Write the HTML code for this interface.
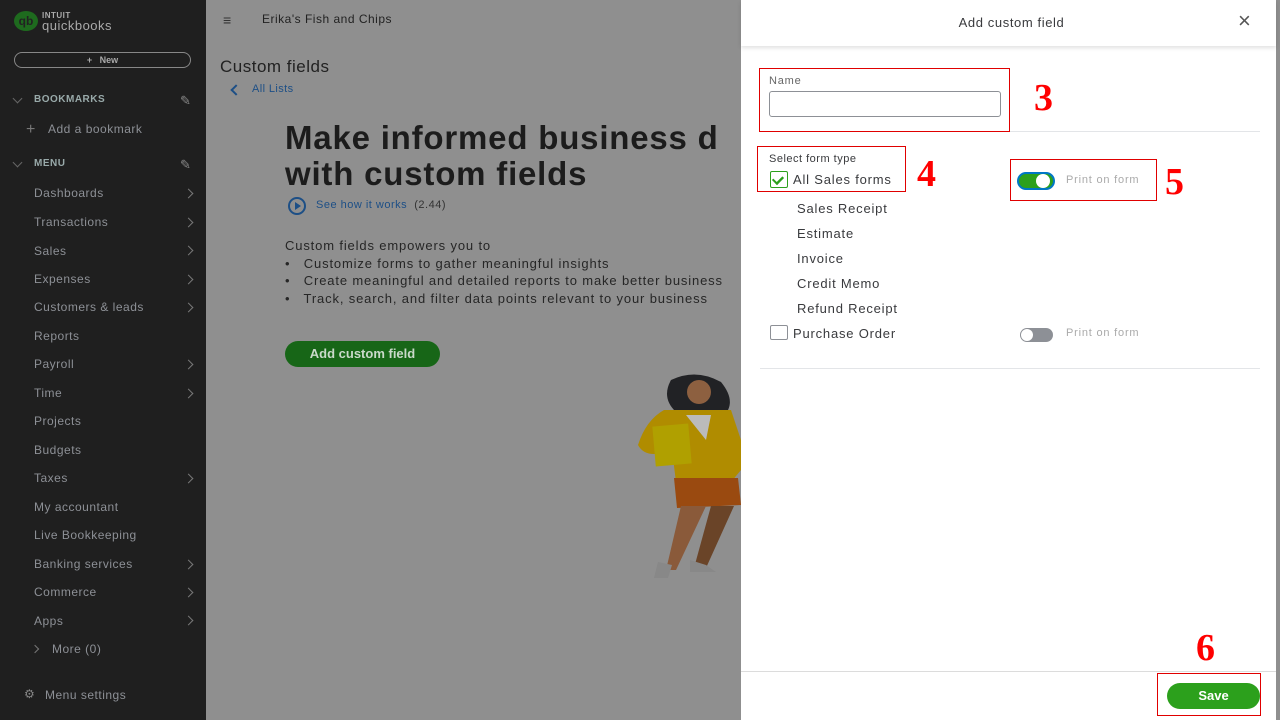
<!DOCTYPE html>
<html><head><meta charset="utf-8"><style>
*{margin:0;padding:0;box-sizing:border-box}
body{width:1280px;height:720px;overflow:hidden;position:relative;font-family:"Liberation Sans",sans-serif;background:#8f8f8f}
.sb{position:absolute;left:0;top:0;width:206px;height:720px;background:#1f1f1f;color:#8e9196}
.sb .it{position:absolute;left:34px;font-size:12px;color:#8d9096;letter-spacing:.5px}
.chev{position:absolute;left:185px;width:7px;height:7px;border-right:1.5px solid #777;border-top:1.5px solid #777;transform:rotate(45deg)}
.main{position:absolute;left:206px;top:0;width:535px;height:720px;background:#8f8f8f}
.panel{position:absolute;left:741px;top:0;width:535px;height:720px;background:#fff}
.red{position:absolute;border:1px solid #e00000}
.num{position:absolute;font-family:"Liberation Serif","DejaVu Serif",serif;font-weight:bold;font-style:normal;color:#f00;font-size:38px}
.lbl{position:absolute;font-size:13px;color:#393a3d;letter-spacing:.8px}
</style></head><body>
<div class="sb">
  <div style="position:absolute;left:14px;top:11px;width:24px;height:20px;border-radius:50%;background:#1e6a1e;color:#222;font-size:12px;font-weight:bold;text-align:center;line-height:20px">qb</div>
  <div style="position:absolute;left:42px;top:11px;font-size:8px;color:#aaa;font-weight:bold;letter-spacing:.5px">INTUIT</div>
  <div style="position:absolute;left:42px;top:18px;font-size:13px;color:#aaa;letter-spacing:.5px">quickbooks</div>
  <div style="position:absolute;left:14px;top:52px;width:177px;height:16px;border:1px solid #888;border-radius:9px;text-align:center;font-size:9px;line-height:14px;color:#aaa;font-weight:bold">+&nbsp;&nbsp; New</div>
  <div style="position:absolute;left:14px;top:95px;width:7px;height:7px;border-right:1px solid #666;border-bottom:1px solid #666;transform:rotate(45deg)"></div>
  <div class="it" style="top:94px;font-size:10px;font-weight:bold;color:#9aa">BOOKMARKS</div>
  <div style="position:absolute;left:180px;top:93px;color:#888;font-size:13px">✎</div>
  <div class="it" style="left:26px;top:121px;font-size:16px;color:#777">+</div>
  <div class="it" style="left:48px;top:122px">Add a bookmark</div>
  <div style="position:absolute;left:14px;top:159px;width:7px;height:7px;border-right:1px solid #666;border-bottom:1px solid #666;transform:rotate(45deg)"></div>
  <div class="it" style="top:158px;font-size:10px;font-weight:bold;color:#9aa">MENU</div>
  <div style="position:absolute;left:180px;top:157px;color:#888;font-size:13px">✎</div>
  <div class="it" style="top:186px">Dashboards</div><div class="chev" style="top:190px"></div>
  <div class="it" style="top:215px">Transactions</div><div class="chev" style="top:219px"></div>
  <div class="it" style="top:244px">Sales</div><div class="chev" style="top:247px"></div>
  <div class="it" style="top:272px">Expenses</div><div class="chev" style="top:276px"></div>
  <div class="it" style="top:300px">Customers &amp; leads</div><div class="chev" style="top:304px"></div>
  <div class="it" style="top:329px">Reports</div>
  <div class="it" style="top:357px">Payroll</div><div class="chev" style="top:361px"></div>
  <div class="it" style="top:386px">Time</div><div class="chev" style="top:390px"></div>
  <div class="it" style="top:414px">Projects</div>
  <div class="it" style="top:443px">Budgets</div>
  <div class="it" style="top:471px">Taxes</div><div class="chev" style="top:475px"></div>
  <div class="it" style="top:500px">My accountant</div>
  <div class="it" style="top:528px">Live Bookkeeping</div>
  <div class="it" style="top:557px">Banking services</div><div class="chev" style="top:561px"></div>
  <div class="it" style="top:585px">Commerce</div><div class="chev" style="top:589px"></div>
  <div class="it" style="top:614px">Apps</div><div class="chev" style="top:617px"></div>
  <div class="chev" style="left:32px;top:646px;width:6px;height:6px"></div>
  <div class="it" style="left:52px;top:642px">More (0)</div>
  <div class="it" style="left:24px;top:687px;color:#888">⚙</div>
  <div class="it" style="left:45px;top:688px">Menu settings</div>
</div>
<div class="main">
  <div style="position:absolute;left:17px;top:12px;font-size:14px;color:#333">≡</div>
  <div style="position:absolute;left:56px;top:12px;font-size:12px;color:#222;letter-spacing:.5px">Erika's Fish and Chips</div>
  <div style="position:absolute;left:14px;top:57px;font-size:17px;color:#222;letter-spacing:.5px">Custom fields</div>
  <div style="position:absolute;left:26px;top:86px;width:8px;height:8px;border-left:2px solid #1d4f86;border-bottom:2px solid #1d4f86;transform:rotate(45deg)"></div>
  <div style="position:absolute;left:46px;top:83px;font-size:11px;color:#1d4f86;letter-spacing:.4px">All Lists</div>
  <div style="position:absolute;left:79px;top:120px;font-size:33px;font-weight:bold;color:#1c1c1c;line-height:36px;white-space:nowrap;letter-spacing:.8px">Make informed business d<br>with custom fields</div>
  <div style="position:absolute;left:82px;top:197px;width:18px;height:18px;border:2px solid #1d4f86;border-radius:50%"></div>
  <div style="position:absolute;left:89px;top:202px;border-left:6px solid #1d4f86;border-top:4px solid transparent;border-bottom:4px solid transparent"></div>
  <div style="position:absolute;left:110px;top:199px;font-size:11px;color:#1d4f86;letter-spacing:.5px">See how it works <span style="color:#333">&nbsp;(2.44)</span></div>
  <div style="position:absolute;left:79px;top:237px;font-size:13px;color:#262626;line-height:17.5px;white-space:nowrap;letter-spacing:.85px">Custom fields empowers you to<br>•&nbsp;&nbsp; Customize forms to gather meaningful insights<br>•&nbsp;&nbsp; Create meaningful and detailed reports to make better business<br>•&nbsp;&nbsp; Track, search, and filter data points relevant to your business</div>
  <div style="position:absolute;left:79px;top:341px;width:155px;height:26px;background:#176617;border-radius:13px;color:#c9d9c9;font-size:13px;font-weight:bold;text-align:center;line-height:26px">Add custom field</div>
  <svg style="position:absolute;left:0;top:0" width="535" height="720">
    <path d="M465 380 Q490 368 515 382 Q528 398 522 410 L470 412 Q455 398 465 380Z" fill="#212225"/>
    <circle cx="493" cy="392" r="12" fill="#8d6040"/>
    <path d="M458 410 L525 410 L535 440 L535 470 L525 482 L470 482 L466 450 Q440 460 432 445 Q440 420 458 410Z" fill="#b08c00"/>
    <rect x="448" y="425" width="36" height="40" fill="#b0a000" transform="rotate(-5 466 445)"/>
    <path d="M480 415 L505 415 L500 440Z" fill="#bbb"/>
    <path d="M468 478 L532 478 L535 505 L471 508Z" fill="#9a4a10"/>
    <path d="M475 506 L500 506 L470 570 L460 570Z" fill="#8a5a3a"/>
    <path d="M505 506 L528 506 L500 568 L488 568Z" fill="#6a4428"/>
    <path d="M452 562 L466 565 L462 578 L448 578Z" fill="#888"/>
    <path d="M484 560 L500 565 L510 572 L484 572Z" fill="#888"/>
  </svg>
</div>
<div style="position:absolute;left:1276px;top:0;width:4px;height:720px;background:#8f8f8f"></div>
<div class="panel">
  <div style="position:absolute;left:0;top:0;width:535px;height:46px;box-shadow:0 2px 4px rgba(0,0,0,.12)"></div>
  <div style="position:absolute;left:0;top:15px;width:541px;text-align:center;font-size:13px;color:#393a3d;letter-spacing:.6px">Add custom field</div>
  <div style="position:absolute;left:497px;top:8px;font-size:22px;color:#555;font-weight:300">×</div>
  <div class="red" style="left:18px;top:68px;width:251px;height:64px"></div>
  <div class="lbl" style="left:28px;top:75px;font-size:11px;color:#666">Name</div>
  <div style="position:absolute;left:28px;top:91px;width:232px;height:26px;border:1px solid #8d9096;border-radius:3px"></div>
  <div style="position:absolute;left:269px;top:131px;width:250px;height:1px;background:#e3e5e8"></div>
  <div class="num" style="left:293px;top:76px">3</div>
  <div class="red" style="left:16px;top:146px;width:149px;height:46px"></div>
  <div class="lbl" style="left:28px;top:153px;font-size:11px;letter-spacing:.5px">Select form type</div>
  <div style="position:absolute;left:29px;top:171px;width:18px;height:17px;border:1.5px solid #2ca01c;border-radius:2px"></div>
  <div style="position:absolute;left:34px;top:174px;width:6px;height:10px;border-right:2px solid #2ca01c;border-bottom:2px solid #2ca01c;transform:rotate(45deg) scaleX(1.2)"></div>
  <div class="lbl" style="left:52px;top:172px">All Sales forms</div>
  <div class="num" style="left:176px;top:152px">4</div>
  <div class="red" style="left:269px;top:159px;width:147px;height:42px"></div>
  <div style="position:absolute;left:276px;top:172px;width:38px;height:18px;border-radius:9px;background:#2ca01c;border:2px solid #0077c5"></div>
  <div style="position:absolute;left:295px;top:174px;width:14px;height:14px;border-radius:50%;background:#fff"></div>
  <div class="lbl" style="left:325px;top:174px;font-size:11px;color:#aaa">Print on form</div>
  <div class="num" style="left:424px;top:160px">5</div>
  <div class="lbl" style="left:56px;top:201px">Sales Receipt</div>
  <div class="lbl" style="left:56px;top:226px">Estimate</div>
  <div class="lbl" style="left:56px;top:251px">Invoice</div>
  <div class="lbl" style="left:56px;top:276px">Credit Memo</div>
  <div class="lbl" style="left:56px;top:301px">Refund Receipt</div>
  <div style="position:absolute;left:29px;top:325px;width:18px;height:15px;border:1px solid #8d9096;border-radius:2px"></div>
  <div class="lbl" style="left:52px;top:326px">Purchase Order</div>
  <div style="position:absolute;left:279px;top:328px;width:33px;height:14px;border-radius:7px;background:#8d9096"></div>
  <div style="position:absolute;left:280px;top:329px;width:12px;height:12px;border-radius:50%;background:#fff"></div>
  <div class="lbl" style="left:325px;top:327px;font-size:11px;color:#aaa">Print on form</div>
  <div style="position:absolute;left:19px;top:368px;width:500px;height:1px;background:#e3e5e8"></div>
  <div class="num" style="left:455px;top:626px">6</div>
  <div style="position:absolute;left:0;top:671px;width:535px;height:1px;background:#dcdcdc"></div>
  <div class="red" style="left:416px;top:673px;width:104px;height:43px"></div>
  <div style="position:absolute;left:426px;top:683px;width:93px;height:26px;border-radius:13px;background:#2ca01c;color:#fff;font-size:13px;font-weight:bold;text-align:center;line-height:26px">Save</div>
</div>
</body></html>
